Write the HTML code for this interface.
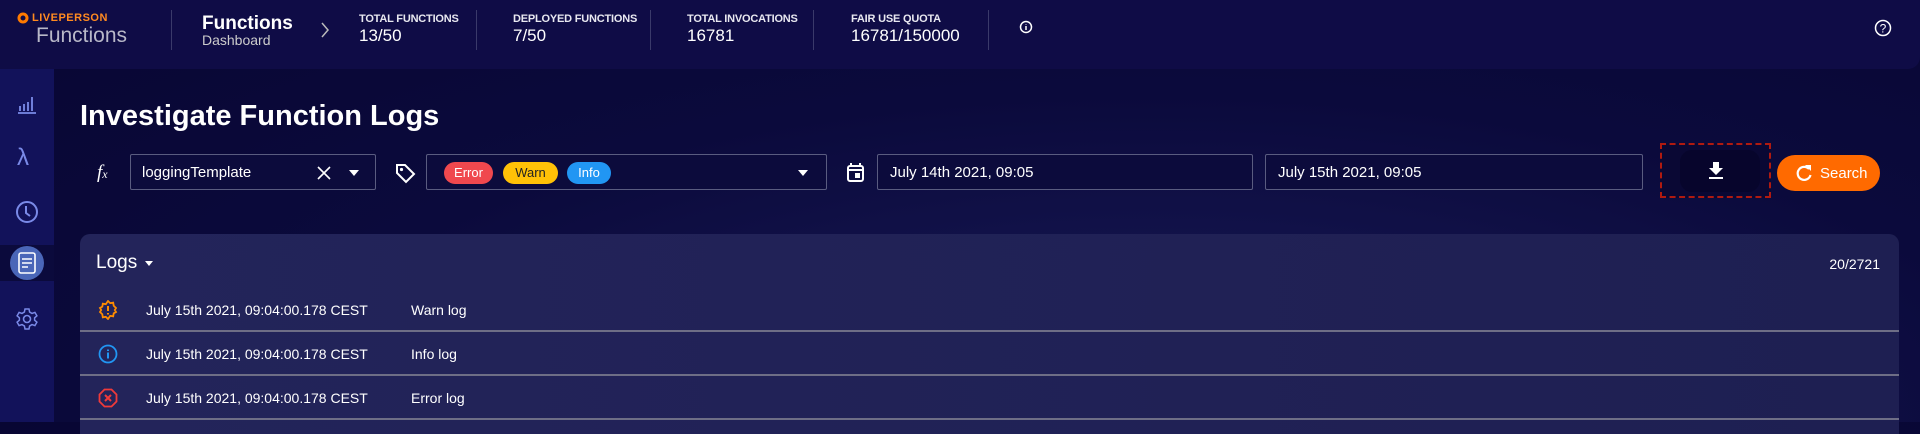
<!DOCTYPE html>
<html><head><meta charset="utf-8"><style>
*{box-sizing:border-box;margin:0;padding:0}
body{width:1920px;height:422px;overflow:hidden;background:radial-gradient(ellipse at 60% 100%,#1a1c5a 0%,#0b0a3c 55%,#080633 100%);font-family:"Liberation Sans",sans-serif;color:#fff;position:relative}
.hdr{position:absolute;left:0;top:0;width:1920px;height:69px;background:#0f0c46;border-radius:0 0 12px 0}
.side{position:absolute;left:0;top:69px;width:54px;height:353px;background:#12125a}
.t{position:absolute;white-space:nowrap}
.div{position:absolute;top:10px;width:1px;height:40px;background:#3a3a6a}
.lab{font-size:11px;font-weight:bold;color:#e8e8f0;letter-spacing:-.2px}
.val{font-size:17px;color:#fff}
.inp{position:absolute;top:154px;height:36px;border:1px solid #5a5c80;border-radius:2px;background:#0c0b3c}
.chip{position:absolute;top:7px;height:22px;border-radius:11px;font-size:13px;line-height:22px;text-align:center}
.panel{position:absolute;left:80px;top:234px;width:1819px;height:200px;background:linear-gradient(90deg,#23245a,#1e1f52);border-radius:10px 10px 0 0}
.row{position:absolute;left:0;width:1819px;height:44px;border-bottom:2px solid #6e6e86}
.row .d{position:absolute;left:66px;top:14px;font-size:14px}
.row .m{position:absolute;left:331px;top:14px;font-size:14px}
.row svg{position:absolute;left:18px;top:12px}
</style></head><body>
<div class="hdr">
 <svg class="t" style="left:17px;top:12px" width="12" height="12" viewBox="0 0 12 12"><circle cx="6" cy="6" r="4" fill="none" stroke="#ff7a00" stroke-width="3"/></svg>
 <div class="t" style="left:32px;top:12px;font-size:11px;font-weight:bold;color:#ff8a20;letter-spacing:.5px">LIVEPERSON</div>
 <div class="t" style="left:36px;top:24px;font-size:21px;color:#b8b8c8">Functions</div>
 <div class="div" style="left:171px"></div>
 <div class="t" style="left:202px;top:13px;font-size:19px;font-weight:bold">Functions</div>
 <div class="t" style="left:202px;top:32px;font-size:14px;color:#ccc">Dashboard</div>
 <svg class="t" style="left:319px;top:20px" width="12" height="20"><path d="M3 3l6 7-6 7" fill="none" stroke="#bbb" stroke-width="1.5"/></svg>
 <div class="t lab" style="left:359px;top:13px">TOTAL FUNCTIONS</div><div class="t val" style="left:359px;top:26px">13/50</div>
 <div class="div" style="left:476px"></div>
 <div class="t lab" style="left:513px;top:13px">DEPLOYED FUNCTIONS</div><div class="t val" style="left:513px;top:26px">7/50</div>
 <div class="div" style="left:650px"></div>
 <div class="t lab" style="left:687px;top:13px">TOTAL INVOCATIONS</div><div class="t val" style="left:687px;top:26px">16781</div>
 <div class="div" style="left:813px"></div>
 <div class="t lab" style="left:851px;top:13px">FAIR USE QUOTA</div><div class="t val" style="left:851px;top:26px">16781/150000</div>
 <div class="div" style="left:988px"></div>
 <svg class="t" style="left:1019px;top:20px" width="14" height="14"><circle cx="7" cy="7" r="5.5" fill="none" stroke="#fff" stroke-width="1.5"/><path d="M7 6v4M7 4v.5" stroke="#fff" stroke-width="1.5"/></svg>
 <svg class="t" style="left:1874px;top:19px" width="18" height="18"><circle cx="9" cy="9" r="7.5" fill="none" stroke="#fff" stroke-width="1.5"/><text x="9" y="13.5" font-size="12" text-anchor="middle" fill="#fff" font-family="Liberation Sans">?</text></svg>
</div>
<div class="side">
 <svg class="t" style="left:16px;top:24px" width="22" height="22"><path d="M2 20h18M4 18v-5M8 18v-7M12 18v-9M16 18v-14" stroke="#7a8ae8" stroke-width="1.8" fill="none"/></svg>
 <div class="t" style="left:17px;top:75px;font-size:24px;color:#7a8ae8">λ</div>
 <svg class="t" style="left:15px;top:131px" width="24" height="24"><circle cx="12" cy="12" r="10" fill="none" stroke="#7a8ae8" stroke-width="2"/><path d="M11 6v7l4 3" stroke="#7a8ae8" stroke-width="2" fill="none"/></svg>
 <div class="t" style="left:0;top:176px;width:54px;height:36px;background:#0b0a3c"></div>
 <div class="t" style="left:10px;top:177px;width:34px;height:34px;border-radius:50%;background:#4a66b8"></div>
 <svg class="t" style="left:17px;top:183px" width="20" height="22"><rect x="2" y="1" width="16" height="20" rx="2" fill="none" stroke="#fff" stroke-width="1.6"/><path d="M5 7h10M5 11h10M5 15h6" stroke="#fff" stroke-width="1.5"/></svg>
 <svg class="t" style="left:15px;top:238px" width="24" height="24" viewBox="0 0 24 24"><circle cx="12" cy="12" r="3.5" fill="none" stroke="#7a8ae8" stroke-width="1.6"/><path d="M10 2h4l.6 3 2.4 1.4 2.9-1 2 3.4-2.3 2v2.4l2.3 2-2 3.4-2.9-1L14.6 19l-.6 3h-4l-.6-3L7 17.6l-2.9 1-2-3.4 2.3-2v-2.4l-2.3-2 2-3.4 2.9 1L9.4 5z" fill="none" stroke="#7a8ae8" stroke-width="1.5"/></svg>
</div>
<div class="t" style="left:80px;top:100px;font-size:29px;font-weight:bold">Investigate Function Logs</div>
<div class="t" style="left:97px;top:162px;font-size:19px;font-style:italic;font-family:'Liberation Serif',serif">f<span style="font-size:12px">x</span></div>
<div class="inp" style="left:130px;width:246px"><div class="t" style="left:11px;top:9px;font-size:15px">loggingTemplate</div>
 <svg class="t" style="left:186px;top:11px" width="14" height="14"><path d="M1 1l12 12M13 1L1 13" stroke="#fff" stroke-width="1.6"/></svg>
 <svg class="t" style="left:218px;top:15px" width="10" height="6"><path d="M0 0h10L5 6z" fill="#fff"/></svg></div>
<svg class="t" style="left:394px;top:162px" width="22" height="22"><path d="M3 3h8l9 9-8 8-9-9z" fill="none" stroke="#fff" stroke-width="2"/><circle cx="7.5" cy="7.5" r="1.6" fill="#fff"/></svg>
<div class="inp" style="left:426px;width:401px">
 <div class="chip" style="left:17px;width:49px;background:#f0484e;color:#fff">Error</div>
 <div class="chip" style="left:76px;width:55px;background:#ffc107;color:#222">Warn</div>
 <div class="chip" style="left:140px;width:44px;background:#2196f3;color:#fff">Info</div>
 <svg class="t" style="left:371px;top:15px" width="10" height="6"><path d="M0 0h10L5 6z" fill="#fff"/></svg></div>
<svg class="t" style="left:847px;top:163px" width="17" height="19"><rect x="1" y="3" width="15" height="15" rx="2" fill="none" stroke="#fff" stroke-width="2"/><path d="M4 0v4M13 0v4M1 7h15" stroke="#fff" stroke-width="2"/><rect x="8" y="10" width="5" height="5" fill="#fff"/></svg>
<div class="inp" style="left:877px;width:376px"><div class="t" style="left:12px;top:9px;font-size:15px">July 14th 2021, 09:05</div></div>
<div class="inp" style="left:1265px;width:378px"><div class="t" style="left:12px;top:9px;font-size:15px">July 15th 2021, 09:05</div></div>
<div class="t" style="left:1660px;top:143px;width:111px;height:55px;border:2px dashed #b01a10;background:#0a0834"></div>
<div class="t" style="left:1680px;top:150px;width:80px;height:42px;border-radius:12px;background:#07052c"></div>
<svg class="t" style="left:1708px;top:162px" width="16" height="18"><path d="M5 0h6v6h4l-7 7-7-7h4z" fill="#fff"/><rect x="1" y="15" width="14" height="2" fill="#fff"/></svg>
<div class="t" style="left:1777px;top:155px;width:103px;height:36px;border-radius:18px;background:#ff6a00"></div>
<svg class="t" style="left:1795px;top:164px" width="18" height="18"><path d="M14 5A6.5 6.5 0 1 0 15.5 11" fill="none" stroke="#fff" stroke-width="2.2"/><path d="M10 1h6v6z" fill="#fff"/></svg>
<div class="t" style="left:1820px;top:165px;font-size:15px">Search</div>
<div class="panel">
 <div class="t" style="left:16px;top:18px;font-size:19px">Logs</div>
 <svg class="t" style="left:65px;top:27px" width="8" height="5"><path d="M0 0h8L4 5z" fill="#fff"/></svg>
 <div class="t" style="right:19px;top:22px;font-size:14px">20/2721</div>
 <div class="row" style="top:54px"><svg width="20" height="20" viewBox="0 0 20 20"><path d="M10 1l2.2 2.2 3-.5.5 3L18 8l-1.2 2 1.2 2-2.3 1.3-.5 3-3-.5L10 19l-2.2-2.2-3 .5-.5-3L2 12l1.2-2L2 8l2.3-1.3.5-3 3 .5z" fill="none" stroke="#ff8c00" stroke-width="1.8"/><path d="M10 6v5M10 13v1.5" stroke="#ff8c00" stroke-width="2"/></svg><div class="d">July 15th 2021, 09:04:00.178 CEST</div><div class="m">Warn log</div></div>
 <div class="row" style="top:98px"><svg width="20" height="20"><circle cx="10" cy="10" r="8.5" fill="none" stroke="#2196f3" stroke-width="1.8"/><path d="M10 8.5v6M10 5.5v1.5" stroke="#2196f3" stroke-width="2"/></svg><div class="d">July 15th 2021, 09:04:00.178 CEST</div><div class="m">Info log</div></div>
 <div class="row" style="top:142px"><svg width="20" height="20"><path d="M6.5 1.5h7l5 5v7l-5 5h-7l-5-5v-7z" fill="none" stroke="#f03a3a" stroke-width="1.8"/><path d="M7 7l6 6M13 7l-6 6" stroke="#f03a3a" stroke-width="2"/></svg><div class="d">July 15th 2021, 09:04:00.178 CEST</div><div class="m">Error log</div></div>
</div>
</body></html>
